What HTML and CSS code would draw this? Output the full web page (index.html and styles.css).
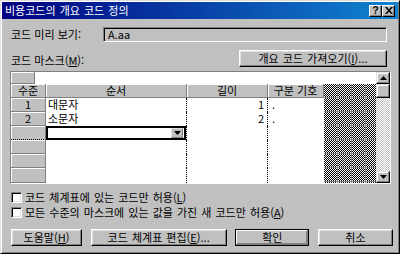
FILE: index.html
```html
<!DOCTYPE html>
<html lang="ko">
<head>
    <meta charset="UTF-8">
    <title>비용코드의 개요 코드 정의</title>
    <link rel="stylesheet" href="styles.css">
</head>
<body>
    <div class="window">
        <div class="titlebar">
            <span class="title">비용코드의 개요 코드 정의</span>
            <div class="title-buttons">
                <span class="tbtn">?</span>
                <span class="tbtn">
                    <svg width="8" height="7" viewBox="0 0 8 7"><path d="M0 0h2l2 2.5 2-2.5h2l-3 3.5 3 3.5h-2l-2-2.5-2 2.5h-2l3-3.5z" fill="#000"/></svg>
                </span>
            </div>
        </div>

        <div class="content">
            <div class="preview-row">
                <span class="label">코드 미리 보기:</span>
                <div class="preview">A.aa</div>
            </div>

            <div class="mask-row">
                <span class="label">코드 마스크(<u>M</u>):</span>
                <button class="btn import-btn">개요 코드 가져오기(<u>I</u>)...</button>
            </div>

            <div class="grid-box">
                <div class="grid-main">
                    <div class="top-row">
                        <div class="corner"></div>
                    </div>
                    <div class="table">
                        <div class="hcell">수준</div>
                        <div class="hcell">순서</div>
                        <div class="hcell">길이</div>
                        <div class="hcell">구분 기호</div>
                        <div class="hatch"></div>

                        <div class="rcell">1</div>
                        <div class="cell c-order">대문자</div>
                        <div class="cell c-len">1</div>
                        <div class="cell c-sep">.</div>

                        <div class="rcell">2</div>
                        <div class="cell c-order">소문자</div>
                        <div class="cell c-len">2</div>
                        <div class="cell c-sep">.</div>

                        <div class="rcell current"></div>
                        <div class="cell c-order">
                            <div class="combo">
                                <span class="combo-btn">
                                    <svg width="7" height="4" viewBox="0 0 7 4"><path d="M0 0h7l-3.5 4z" fill="#000"/></svg>
                                </span>
                            </div>
                        </div>
                        <div class="cell c-len"></div>
                        <div class="cell c-sep"></div>

                        <div class="rcell"></div>
                        <div class="cell c-order"></div>
                        <div class="cell c-len"></div>
                        <div class="cell c-sep"></div>

                        <div class="rcell"></div>
                        <div class="cell c-order"></div>
                        <div class="cell c-len"></div>
                        <div class="cell c-sep"></div>

                        <div class="rcell"></div>
                        <div class="cell c-order"></div>
                        <div class="cell c-len"></div>
                        <div class="cell c-sep"></div>
                    </div>
                </div>
                <div class="vscroll">
                    <span class="sbtn">
                        <svg width="7" height="4" viewBox="0 0 7 4"><path d="M3.5 0l3.5 4h-7z" fill="#000"/></svg>
                    </span>
                    <span class="thumb"></span>
                    <span class="track"></span>
                    <span class="sbtn">
                        <svg width="7" height="4" viewBox="0 0 7 4"><path d="M0 0h7l-3.5 4z" fill="#000"/></svg>
                    </span>
                </div>
            </div>

            <div class="check-row">
                <span class="checkbox"></span>
                <span>코드 체계표에 있는 코드만 허용(<u>L</u>)</span>
            </div>
            <div class="check-row">
                <span class="checkbox"></span>
                <span>모든 수준의 마스크에 있는 값을 가진 새 코드만 허용(<u>A</u>)</span>
            </div>

            <div class="buttons">
                <button class="btn btn-help">도움말(<u>H</u>)</button>
                <button class="btn btn-edit">코드 체계표 편집(<u>E</u>)...</button>
                <button class="btn btn-ok">확인</button>
                <button class="btn btn-cancel">취소</button>
            </div>
        </div>
    </div>
</body>
</html>
```

FILE: styles.css
```css
* {
    margin: 0;
    padding: 0;
    box-sizing: border-box;
}

body {
    width: 400px;
    height: 254px;
    overflow: hidden;
    font-family: "Noto Sans CJK KR", "Liberation Sans", sans-serif;
    font-size: 11px;
    line-height: 13px;
    color: #000;
}

u {
    text-decoration: underline;
    text-underline-offset: 1px;
}

.window {
    width: 400px;
    height: 254px;
    background: #c0c0c0;
    border: 1px solid;
    border-color: #dfdfdf #000 #000 #dfdfdf;
    padding: 1px;
    box-shadow: inset 1px 1px #fff, inset -1px -1px #808080;
}

/* title bar */
.titlebar {
    height: 17px;
    display: flex;
    align-items: center;
    justify-content: space-between;
    padding: 0 3px 0 3px;
    background: linear-gradient(90deg, #000080, #1084d0);
    color: #fff;
}

.title {
    font-size: 11px;
    word-spacing: 1px;
}

.title-buttons {
    display: flex;
}

.tbtn {
    width: 13px;
    height: 12px;
    display: flex;
    align-items: center;
    justify-content: center;
    background: #c0c0c0;
    color: #000;
    font-family: "Liberation Sans", sans-serif;
    font-weight: bold;
    font-size: 10px;
    border: 1px solid;
    border-color: #fff #000 #000 #fff;
    box-shadow: inset -1px -1px #808080;
}

/* body */
.content {
    padding: 0 5px 0 9px;
}

.preview-row {
    display: flex;
    align-items: center;
    height: 15px;
    margin-top: 8px;
    margin-right: 6px;
}

.preview-row .label {
    width: 92px;
}

.preview {
    flex: 1;
    height: 15px;
    padding-left: 4px;
    line-height: 13px;
    border: 1px solid;
    border-color: #808080 #fff #fff #808080;
    box-shadow: inset 1px 1px #000;
}

.mask-row {
    display: flex;
    align-items: flex-end;
    justify-content: space-between;
    height: 17px;
    margin-top: 8px;
    margin-right: 6px;
}

.btn {
    height: 17px;
    background: #c0c0c0;
    font-family: inherit;
    font-size: 11px;
    line-height: 13px;
    color: #000;
    border: 1px solid;
    border-color: #fff #000 #000 #fff;
    box-shadow: inset -1px -1px #808080, inset 1px 1px #dfdfdf;
    word-spacing: 1px;
}

.import-btn {
    width: 148px;
}

/* grid */
.grid-box {
    display: flex;
    height: 113px;
    margin: 4px 2px 0 -1px;
    border: 1px solid;
    border-color: #808080 #fff #fff #808080;
}

.grid-main {
    width: 365px;
    display: flex;
    flex-direction: column;
    background: #fff;
}

.top-row {
    height: 12px;
    display: flex;
}

.corner {
    width: 24px;
    background: #c0c0c0;
    border-right: 1px solid #808080;
    border-bottom: 1px solid #808080;
    box-shadow: inset 1px 1px #fff;
}

.table {
    flex: 1;
    display: grid;
    grid-template-columns: 35px 141px 81px 56px 52px;
    grid-template-rows: repeat(6, 14px) 1fr;
}

.hcell,
.rcell {
    background: #c0c0c0;
    text-align: center;
    border-right: 1px solid #808080;
    border-bottom: 1px solid #808080;
    box-shadow: inset 1px 1px #fff;
    white-space: nowrap;
}

.rcell.current {
    border-bottom: 1px dotted #000;
}

.cell {
    padding: 0 2px;
    white-space: nowrap;
}

.c-order,
.c-len {
    border-right: 1px dotted #000;
}

.c-len {
    text-align: right;
    padding-right: 3px;
}

.c-sep {
    padding-left: 4px;
}

.c-order:has(.combo) {
    padding: 0;
}

.combo {
    height: 14px;
    display: flex;
    justify-content: flex-end;
    align-items: center;
    border: 2px solid #000;
    background: #fff;
    padding-right: 1px;
}

.combo-btn {
    width: 12px;
    height: 10px;
    display: flex;
    align-items: center;
    justify-content: center;
    background: #c0c0c0;
    border: 1px solid;
    border-color: #dfdfdf #808080 #808080 #dfdfdf;
}

.hatch {
    grid-column: 5;
    grid-row: 1 / -1;
    background-color: #fff;
    background-image:
        repeating-linear-gradient(90deg, transparent 0 13px, #808080 13px 14px),
        repeating-linear-gradient(180deg, transparent 0 13px, #808080 13px 14px),
        conic-gradient(#000 25%, transparent 0 50%, #000 0 75%, transparent 0);
    background-size: auto, auto, 2px 2px;
}

/* scrollbar */
.vscroll {
    width: 15px;
    display: flex;
    flex-direction: column;
}

.sbtn,
.thumb {
    display: flex;
    align-items: center;
    justify-content: center;
    background: #c0c0c0;
    border: 1px solid;
    border-color: #dfdfdf #000 #000 #dfdfdf;
    box-shadow: inset -1px -1px #808080, inset 1px 1px #fff;
}

.sbtn {
    height: 12px;
}

.thumb {
    height: 14px;
}

.track {
    flex: 1;
    background-color: #fff;
    background-image: conic-gradient(#c0c0c0 25%, transparent 0 50%, #c0c0c0 0 75%, transparent 0);
    background-size: 2px 2px;
}

/* options */
.check-row {
    display: flex;
    align-items: center;
    gap: 3px;
    height: 15px;
    word-spacing: 1px;
}

.grid-box + .check-row {
    margin-top: 6px;
}

.checkbox {
    width: 11px;
    height: 11px;
    background: #fff;
    border: 1px solid;
    border-color: #808080 #fff #fff #808080;
    box-shadow: inset 1px 1px #000, inset -1px -1px #dfdfdf;
}

/* bottom buttons */
.buttons {
    display: flex;
    justify-content: space-between;
    margin-top: 9px;
}

.btn-help {
    width: 71px;
}

.btn-edit {
    width: 136px;
}

.btn-ok {
    width: 74px;
    border-color: #000;
    box-shadow: inset -1px -1px #808080, inset 1px 1px #fff, inset -2px -2px #808080;
}

.btn-cancel {
    width: 75px;
}
```
